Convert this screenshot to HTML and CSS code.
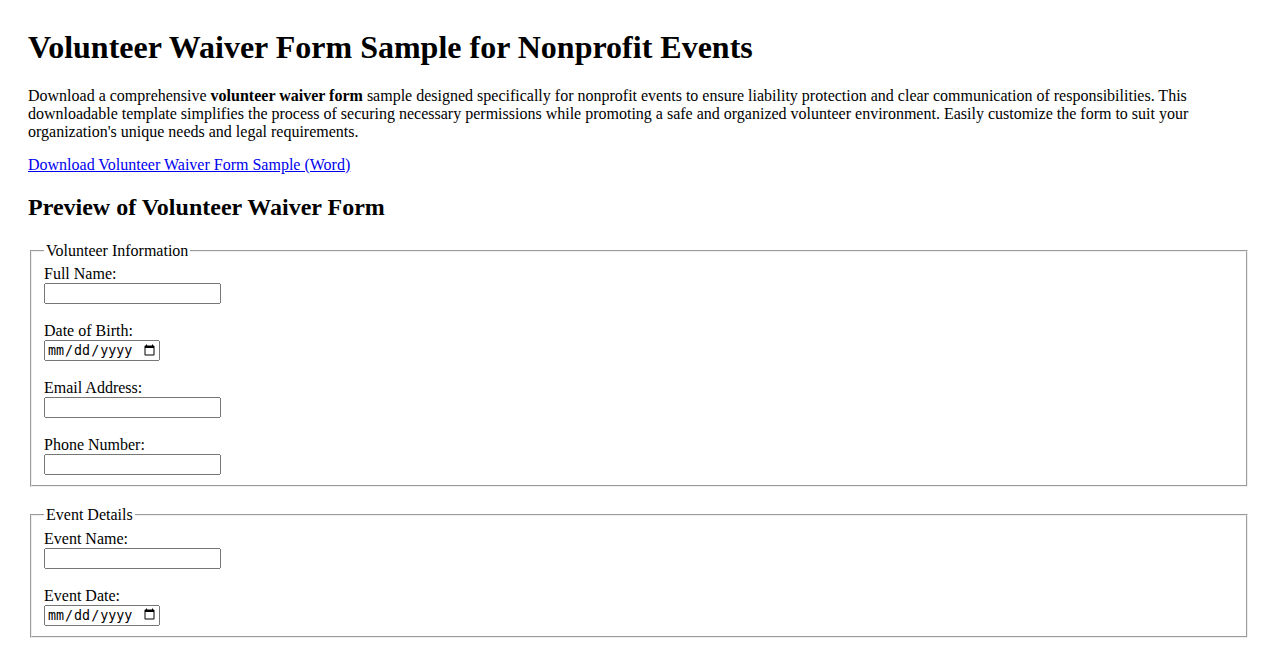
FILE: index.html
```html
<!DOCTYPE html>
<html lang="en">
<head>
<meta charset="utf-8">
<title>Volunteer Waiver Form Sample for Nonprofit Events</title>
<link rel="stylesheet" href="styles.css">
</head>
<body>
<h1 class="title">Volunteer Waiver Form Sample for Nonprofit Events</h1>
<p class="intro">Download a comprehensive <strong>volunteer waiver form</strong> sample designed specifically for nonprofit events to ensure liability protection and clear communication of responsibilities. This downloadable template simplifies the process of securing necessary permissions while promoting a safe and organized volunteer environment. Easily customize the form to suit your organization's unique needs and legal requirements.</p>
<p class="download"><a href="#">Download Volunteer Waiver Form Sample (Word)</a></p>
<h2 class="subtitle">Preview of Volunteer Waiver Form</h2>
<form class="waiver">
<fieldset class="section">
<legend>Volunteer Information</legend>
<label for="name">Full Name:</label><br>
<input class="field" type="text" id="name"><br><br>
<label for="dob">Date of Birth:</label><br>
<input class="field date" type="date" id="dob"><br><br>
<label for="email">Email Address:</label><br>
<input class="field" type="email" id="email"><br><br>
<label for="phone">Phone Number:</label><br>
<input class="field" type="tel" id="phone">
</fieldset>
<fieldset class="section">
<legend>Event Details</legend>
<label for="event">Event Name:</label><br>
<input class="field" type="text" id="event"><br><br>
<label for="edate">Event Date:</label><br>
<input class="field date" type="date" id="edate">
</fieldset>
</form>
</body>
</html>
```
FILE: styles.css
```css
body {
  margin: 8px;
  padding: 0 20px;
  font-family: "Liberation Serif", "Times New Roman", serif;
  font-size: 16px;
  color: #000;
  background: #fff;
}
.title {
  line-height: 36px;
}
.intro {
  margin-bottom: 15px;
}
.download {
  margin-top: 15px;
}
.subtitle {
  margin-top: 20px;
  margin-bottom: 21px;
}
.section {
  margin-bottom: 18.5px;
}
.field {
  box-sizing: border-box;
  width: 177px;
  height: 21px;
  font-size: 13.333px;
}
.field.date {
  width: 116px;
}
```
